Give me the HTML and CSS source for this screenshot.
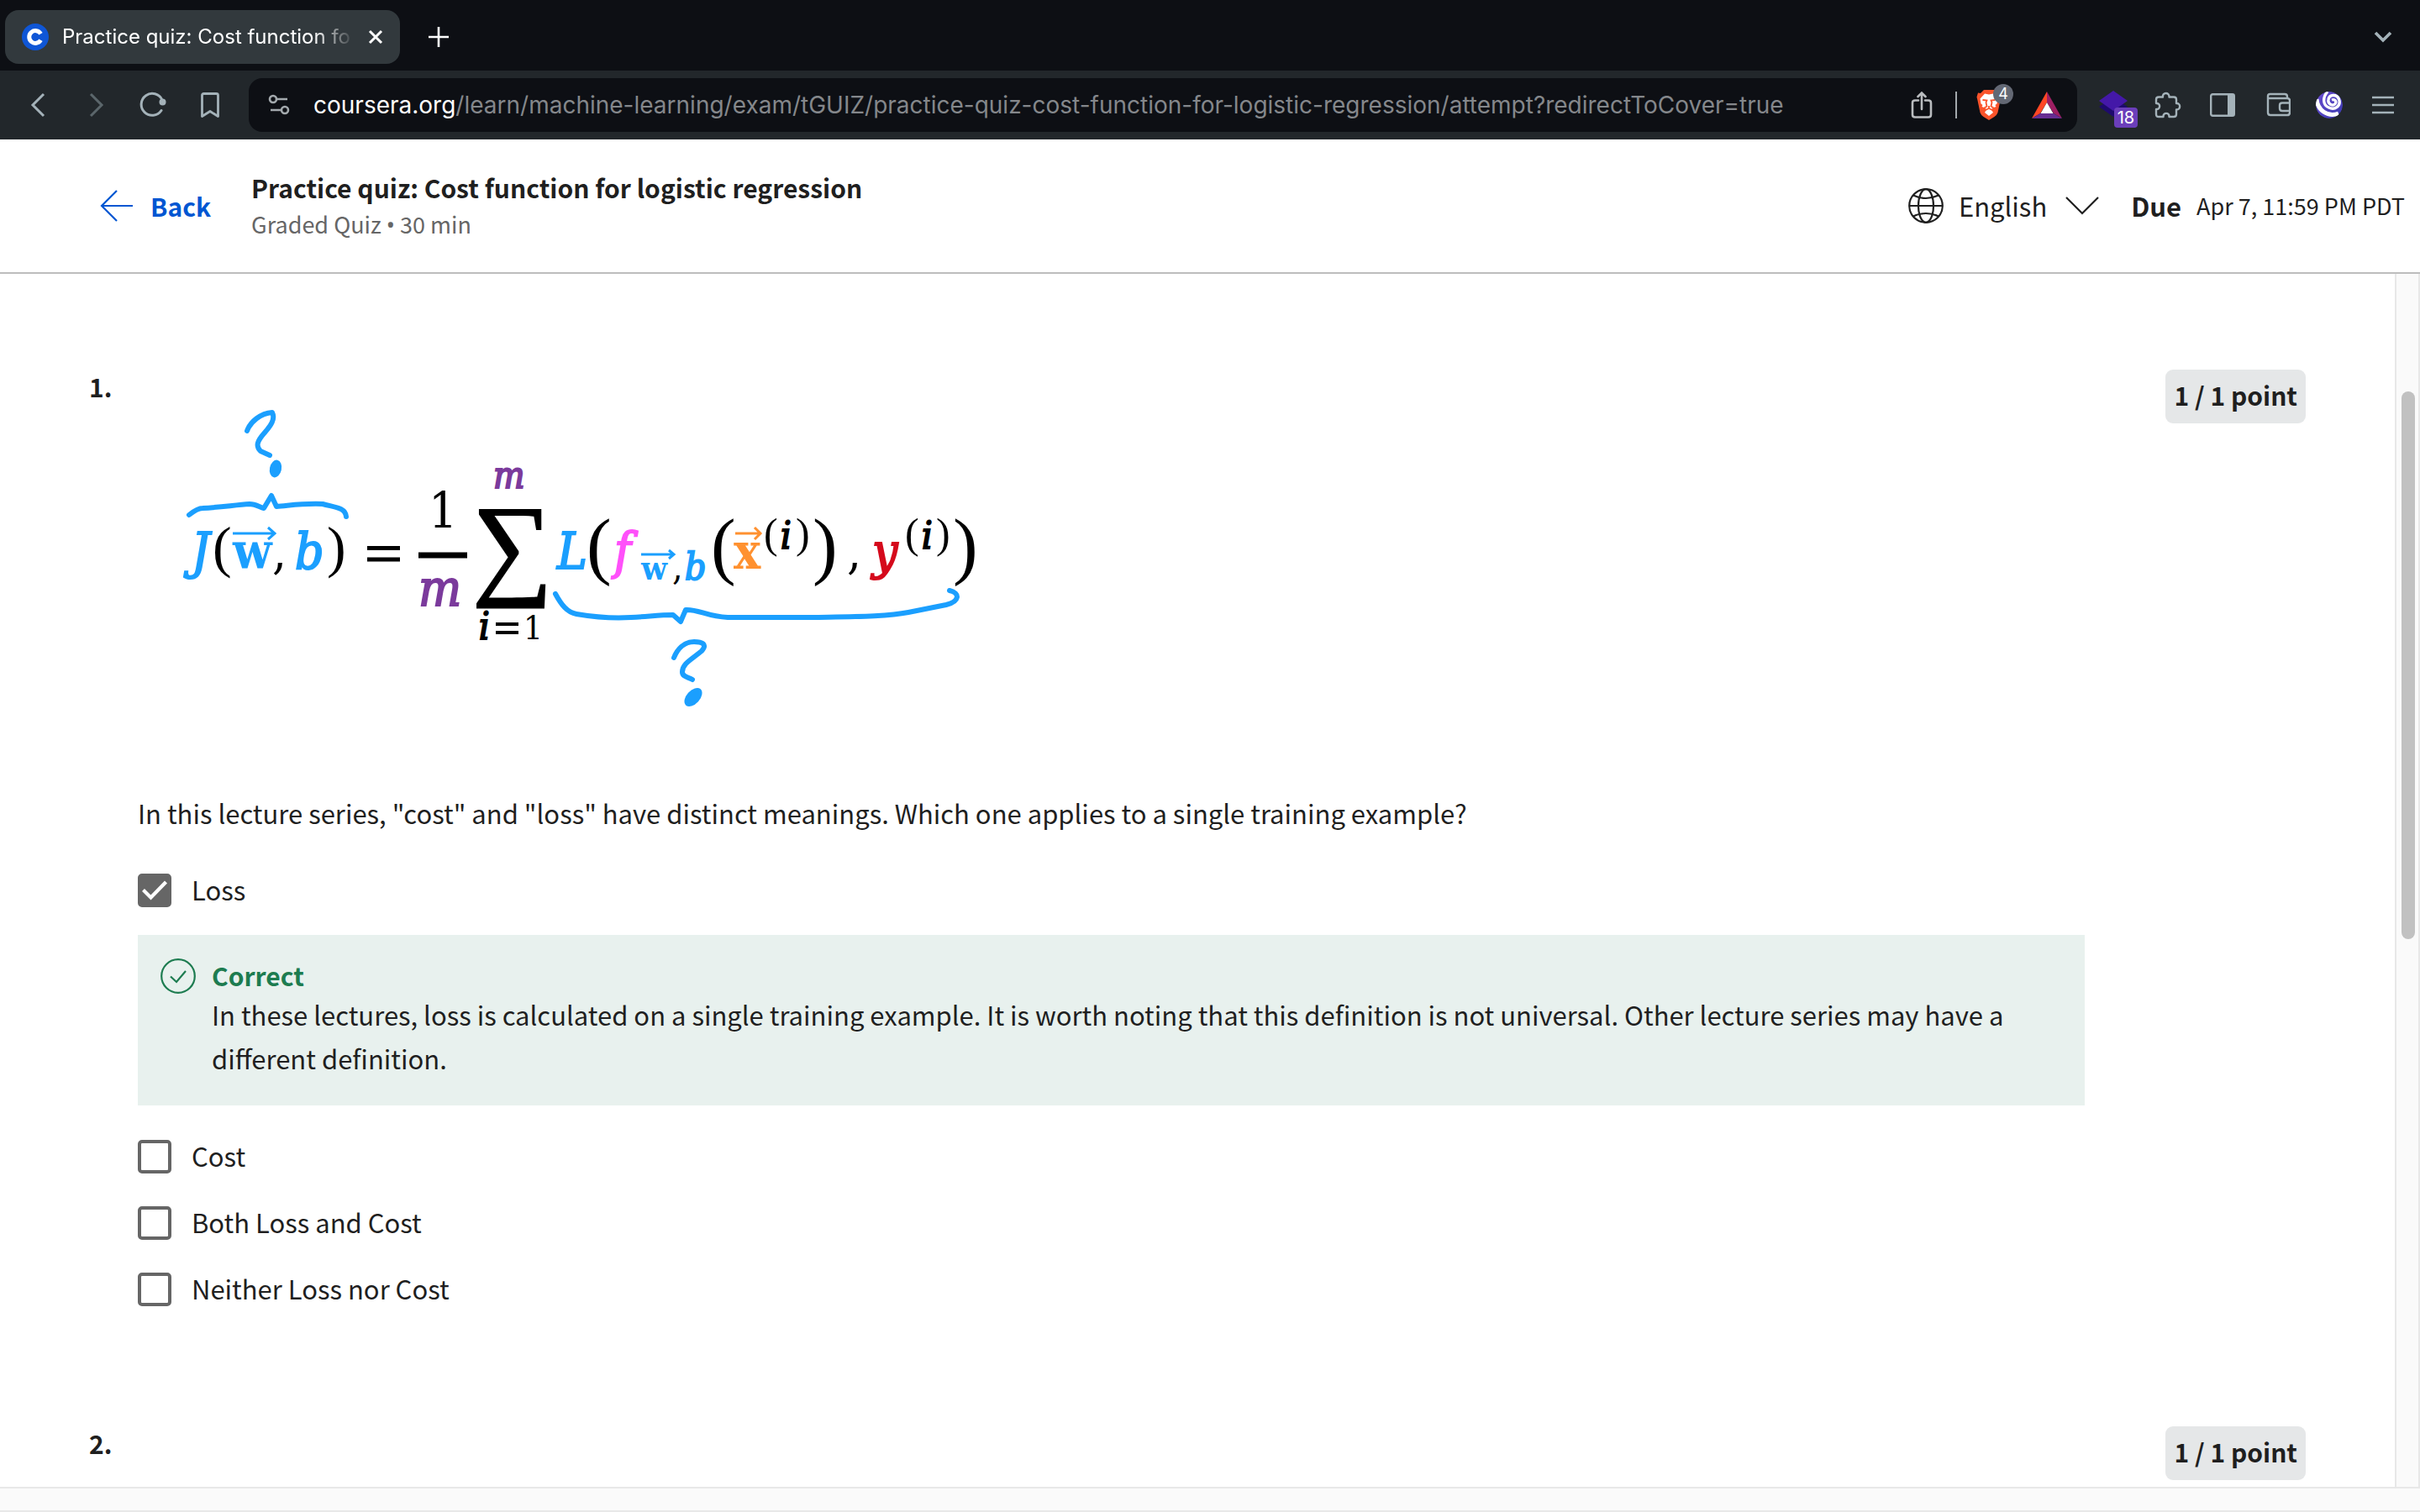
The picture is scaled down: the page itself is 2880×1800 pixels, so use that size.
FILE: index.html
```
<!DOCTYPE html>
<html lang="en">
<head>
<meta charset="utf-8">
<meta name="viewport" content="width=device-width, initial-scale=1">
<title>Practice quiz: Cost function for logistic regression</title>
<link rel="stylesheet" href="styles.css">
</head>
<body>
<div class="tabstrip">
  <div class="tab">
    <svg class="favicon" viewBox="0 0 32 32" aria-hidden="true"><circle cx="16" cy="16" r="16" fill="#0f56d6"/><path d="M22.5 12.2A7.4 7.4 0 1 0 22.5 19.8" fill="none" stroke="#fff" stroke-width="5"/></svg>
    <span class="tab-title">Practice quiz: Cost function fo</span>
    <button class="icon-button tab-close" aria-label="Close tab"><svg width="18" height="18" viewBox="0 0 18 18"><path d="M2 2l14 14M16 2L2 16" stroke="#fff" stroke-width="3"/></svg></button>
  </div>
  <button class="icon-button new-tab" aria-label="New tab"><svg width="24" height="24" viewBox="0 0 24 24"><path d="M12 0v24M0 12h24" stroke="#fff" stroke-width="2.6"/></svg></button>
  <button class="icon-button tab-search" aria-label="Search tabs"><svg width="24" height="16" viewBox="0 0 24 16"><path d="M3 3l9 9 9-9" fill="none" stroke="#a4b2b9" stroke-width="3.6"/></svg></button>
</div>

<div class="toolbar">
  <div class="nav-buttons">
    <button class="icon-button" aria-label="Back"><svg width="32" height="32" viewBox="0 0 32 32"><path d="M22 3L9 16l13 13" fill="none" stroke="#a4b2b9" stroke-width="3"/></svg></button>
    <button class="icon-button" aria-label="Forward"><svg width="32" height="32" viewBox="0 0 32 32"><path d="M10 3l13 13-13 13" fill="none" stroke="#5b666b" stroke-width="3"/></svg></button>
    <button class="icon-button" aria-label="Reload"><svg width="32" height="32" viewBox="0 0 32 32"><path d="M26 22.500A13 13 0 1 1 27 10" fill="none" stroke="#a4b2b9" stroke-width="3" stroke-linecap="round"/><circle cx="27.500" cy="12.500" r="4" fill="#a4b2b9"/></svg></button>
    <button class="icon-button" aria-label="Bookmark"><svg width="32" height="32" viewBox="0 0 32 32"><path d="M6.500 4.500q0-2 2-2h15q2 0 2 2v25L16 23.500l-9.500 6z" fill="none" stroke="#a4b2b9" stroke-width="2.800" stroke-linejoin="round"/></svg></button>
  </div>
  <div class="address">
    <svg class="site-icon" width="26" height="26" viewBox="0 0 26 26" fill="none" stroke="#a3a9ad" stroke-width="2.600"><circle cx="6" cy="6" r="4"/><path d="M10 6h13M3 19h13"/><circle cx="20" cy="19" r="4"/></svg>
    <div class="url"><span class="host">coursera.org</span>/learn/machine-learning/exam/tGUIZ/practice-quiz-cost-function-for-logistic-regression/attempt?redirectToCover=true</div>
    <button class="icon-button share" aria-label="Share"><svg width="26" height="34" viewBox="0 0 26 34" fill="none" stroke="#b9bcbf" stroke-width="2.600" stroke-linecap="round"><path d="M9 11.500H5q-3 0-3 3v14q0 3 3 3h16q3 0 3-3v-14q0-3-3-3h-4M13 22V3M8.500 7L13 2.500 17.500 7"/></svg></button>
    <span class="divider"></span>
    <button class="icon-button brave" aria-label="Brave Shields"><svg width="32" height="38" viewBox="0 0 32 38"><path d="M10 1h12l4 4 3-.5 1.500 5-1 4-3 14.500q-1 3-4 5L16 37l-6.500-4q-3-2-4-5L2.500 13.500l-1-4L3 4.500 6 5z" fill="#fb542b"/><path d="M16 6.500l5-1 5.500 6-1 6-2 1.500 1 2-4 1.500-1.500 2L21 28l-5 4-5-4 2-3.500-1.500-2-4-1.500 1-2-2-1.500-1-6 5.500-6z" fill="#fff"/><path d="M8.500 13l5 .5-1 2.500 1 4.500-3 2M23.500 13l-5 .5 1 2.500-1 4.500 3 2M10 26l6-3 6 3M16 20v3" fill="none" stroke="#fb542b" stroke-width="1.800"/></svg><span class="count">4</span></button>
    <button class="icon-button" aria-label="Brave Rewards"><svg width="38" height="32" viewBox="0 0 38 32"><path d="M19 0L1 32l10-6 8-13z" fill="#ff4724"/><path d="M19 0l18 32-10-6-8-13z" fill="#9e1f63"/><path d="M1 32h36l-10-6H11z" fill="#662d91"/><path d="M19 13l7.500 13h-15z" fill="#fff"/></svg></button>
  </div>
  <div class="extensions">
    <button class="icon-button layers" aria-label="Extension with 18 items"><svg width="34" height="34" viewBox="0 0 34 34"><path d="M17 8l17 11-17 12L0 19z" fill="#1e0a6e"/><path d="M17 0l17 12-17 12L0 12z" fill="#4418a8"/></svg><span class="tally">18</span></button>
    <button class="icon-button" aria-label="Extensions"><svg width="32" height="32" viewBox="0 0 32 32"><path d="M10 6.500C9 .5 18 .5 17.500 6.500H23q3 0 3 3V14c5.500-.5 5.500 8 0 7.500V27q0 3-3 3h-5.500c.5-5.500-7.500-5.500-7 0H5q-3 0-3-3v-6c5.500.5 5.500-7.500 0-7V9.500q0-3 3-3z" fill="none" stroke="#a4b2b9" stroke-width="2.400" stroke-linejoin="round"/></svg></button>
    <button class="icon-button" aria-label="Sidebar"><svg width="32" height="32" viewBox="0 0 32 32"><rect x="3.200" y="3.200" width="27.600" height="25.600" rx="2" fill="none" stroke="#a4b2b9" stroke-width="2.400"/><path d="M23 3h8v26h-8z" fill="#a4b2b9"/></svg></button>
    <button class="icon-button" aria-label="Wallet"><svg class="wide-icon" width="32" height="32" viewBox="0 0 32 32" fill="none" stroke="#a4b2b9" stroke-width="2.400"><path d="M28 8V6q0-3-3-3H7.500Q5 3 5 5.500V25q0 3 3 3h20q3 0 3-3V11q0-3-3-3H5"/><path d="M31 13.500H22q-3 0-3 3V20q0 3 3 3h9"/></svg></button>
    <button class="icon-button" aria-label="Profile"><svg width="32" height="32" viewBox="0 0 32 32"><defs><linearGradient id="orb" x1="0" y1="0" x2="1" y2="1"><stop offset="0" stop-color="#6a4bd0"/><stop offset="1" stop-color="#3a3ab0"/></linearGradient><clipPath id="disc"><circle cx="16" cy="16" r="16"/></clipPath></defs><g clip-path="url(#disc)"><circle cx="16" cy="16" r="16" fill="url(#orb)"/><path d="M19 10c4-1.500 6 2 4 4.500-3 3.500-9 0-8-5C16 3 25 3 27.500 9c3 8-5 13.500-12 10C8 16 8 7 14 0" fill="none" stroke="#fff" stroke-width="3.400"/><path d="M1 9C2 22 14 31 27 26" fill="none" stroke="#fff" stroke-width="5"/></g></svg></button>
    <button class="icon-button" aria-label="Menu"><svg width="32" height="32" viewBox="0 0 32 32"><path d="M3 7h26M3 16h26M3 25h26" stroke="#a4b2b9" stroke-width="2.600"/></svg></button>
  </div>
</div>

<header class="quiz-header">
  <a class="back" href="#"><svg width="40" height="38" viewBox="0 0 40 38"><path d="M39 19H2M20 1L2 19l18 18" fill="none" stroke="#0056d2" stroke-width="2.200"/></svg>Back</a>
  <div class="heading">
    <h1>Practice quiz: Cost function for logistic regression</h1>
    <p>Graded Quiz <span class="dot">•</span> 30 min</p>
  </div>
  <button class="language"><svg width="42" height="42" viewBox="0 0 42 42" fill="none" stroke="#1f1f1f" stroke-width="2.200"><circle cx="21" cy="21" r="19.800"/><ellipse cx="21" cy="21" rx="9" ry="19.800"/><path d="M1 21h40M6 8.500q15 7 30 0M6 33.500q15-7 30 0"/></svg>English<svg class="caret" width="40" height="22" viewBox="0 0 40 22"><path d="M1 1l19 19L39 1" fill="none" stroke="#1f1f1f" stroke-width="2.200"/></svg></button>
  <p class="due"><strong>Due</strong>Apr 7, 11:59 PM PDT</p>
</header>

<div class="viewport">
  <main class="questions">
    <section class="question">
      <h2 class="number">1.</h2>
      <div class="question-body">
        <svg class="formula" width="1056" height="460" viewBox="164 440 1056 460" role="img" aria-label="Cost function formula">
          <g class="ink">
            <path d="M294 513C298 502 310 492 324 491 328 499 322 507 315 515 306 525 304 531 310 537L321 542" stroke-width="6"/>
            <path d="M225 613q10-8 16-8c20-1 40-4 56-5 8 0 12 4 17 5l9-15 6 13c15-1 30-4 55-3 14 4 27 4 28 15" stroke-width="6"/>
            <path d="M661 707c7 13 14 22 25 24 30 5 50 5 65 4 20-1 35-3 50-3l9 8 6-14c15-1 25 8 50 9h100c50-1 90-1 115-6l45-9c16-4 17-14 4-17" stroke-width="6"/>
            <path d="M802 783c4-10 12-19 24-19 10 0 16 3 9 11-12 10-23 15-23 25 0 6 7 6 12 9" stroke-width="6"/>
          </g>
          <ellipse cx="328" cy="558" rx="7" ry="10.500" fill="#1b9ffe" transform="rotate(12 328 558)"/>
          <ellipse cx="825" cy="830" rx="8" ry="13" fill="#1b9ffe" transform="rotate(42 825 830)"/>
          <g class="vec">
            <path d="M277 635h48M319 628l8 7-8 7"/>
            <path d="M763 660h38M796 655l6 5-6 5"/>
            <path class="vec-x" d="M875 635h28M898 628l7 7-7 7"/>
          </g>
          <g class="math">
            <text x="228" y="677" class="main it blue">J</text>
            <text x="253" y="674" class="paren">(</text>
            <text x="277" y="677" class="main bold blue">w</text>
            <text x="324" y="677" class="main">,</text>
            <text x="351" y="677" class="main it blue">b</text>
            <text x="389" y="674" class="paren">)</text>
            <text x="510" y="629" class="main">1</text>
            <text x="498" y="721" class="main it purple">m</text>
            <text x="587" y="581" class="script it purple">m</text>
            <text x="562" y="695" class="sum">∑</text>
            <text x="570" y="761" class="script it">i</text>
            <text x="623" y="761" class="limit">1</text>
            <text x="663" y="677" class="main it blue">L</text>
            <text x="698" y="679" class="tall">(</text>
            <text x="731" y="677" class="main it pink">f</text>
            <text x="763" y="690" class="limit bold blue">w</text>
            <text x="800" y="690" class="script">,</text>
            <text x="815" y="690" class="script it blue">b</text>
            <text x="846" y="679" class="tall">(</text>
            <text x="873" y="677" class="main bold orange">x</text>
            <text x="909" y="652" class="power">(</text>
            <text x="929" y="653" class="script it">i</text>
            <text x="947" y="652" class="power">)</text>
            <text x="967" y="679" class="tall">)</text>
            <text x="1008" y="677" class="main">,</text>
            <text x="1038" y="677" class="main it red">y</text>
            <text x="1077" y="652" class="power">(</text>
            <text x="1097" y="653" class="script it">i</text>
            <text x="1114" y="652" class="power">)</text>
            <text x="1134" y="679" class="tall">)</text>
          </g>
          <path d="M437 652.500h39M437 666h39" stroke="#000" stroke-width="5"/>
          <path d="M590 743h27M590 753h27" stroke="#000" stroke-width="4"/>
          <path d="M498 661h58" stroke="#000" stroke-width="7"/>
        </svg>
        <p class="prompt">In this lecture series, "cost" and "loss" have distinct meanings. Which one applies to a single training example?</p>
        <label class="option"><input type="checkbox" checked>Loss</label>
        <div class="feedback">
          <svg width="42" height="42" viewBox="0 0 42 42" fill="none" stroke="#1d7c50" stroke-width="2.200"><circle cx="21" cy="21" r="19.800"/><path d="M12 21.500l7 6.500 11-13"/></svg>
          <div>
            <h3>Correct</h3>
            <p>In these lectures, loss is calculated on a single training example. It is worth noting that this definition is not universal. Other lecture series may have a different definition.</p>
          </div>
        </div>
        <label class="option"><input type="checkbox">Cost</label>
        <label class="option"><input type="checkbox">Both Loss and Cost</label>
        <label class="option"><input type="checkbox">Neither Loss nor Cost</label>
      </div>
      <span class="points">1 / 1 point</span>
    </section>
    <section class="question">
      <h2 class="number">2.</h2>
      <div class="question-body"></div>
      <span class="points">1 / 1 point</span>
    </section>
  </main>
  <div class="scroll-v"><div class="thumb"></div></div>
  <div class="scroll-h"></div>
</div>
</body>
</html>
```
FILE: styles.css
```
* { box-sizing: border-box; }

body {
  margin: 0;
  height: 100vh;
  display: flex;
  flex-direction: column;
  overflow: hidden;
  background: #fff;
  color: #1f1f1f;
  font: 31px/40px "Noto Sans CJK SC", "Noto Sans", sans-serif;
}

h1, h2, h3, p { margin: 0; }

button {
  border: 0;
  padding: 0;
  background: none;
  color: inherit;
  font: inherit;
}

svg { display: block; flex: none; }

/* Browser chrome */
.icon-button { position: relative; display: flex; flex: none; }

.tabstrip {
  flex: none;
  display: flex;
  align-items: center;
  height: 84px;
  padding: 4px 32px 0 6px;
  background: #0d0f14;
  color: #fff;
  font: 24px/32px Inter, sans-serif;
}

.tab {
  display: flex;
  align-items: center;
  width: 470px;
  height: 64px;
  padding: 0 20px;
  border-radius: 16px;
  background: #32393d;
}

.favicon { width: 32px; height: 32px; }

.tab-title {
  flex: 1;
  margin: 0 16px;
  white-space: nowrap;
  mask-image: linear-gradient(to right, #000 86%, transparent);
}

.new-tab { margin-left: 34px; }
.tab-search { margin-left: auto; }

.toolbar {
  flex: none;
  display: flex;
  align-items: center;
  height: 82px;
  padding: 0 28px 0 30px;
  background: #22272b;
  font-family: Inter, sans-serif;
}

.nav-buttons { display: flex; gap: 36px; margin-right: 30px; }

.address {
  flex: 1;
  min-width: 0;
  display: flex;
  align-items: center;
  height: 64px;
  padding: 0 17px 0 23px;
  border-radius: 16px;
  background: #0d0f14;
}

.url {
  flex: 1;
  min-width: 0;
  margin-left: 28px;
  overflow: hidden;
  color: #84878b;
  font-size: 28px;
  white-space: nowrap;
}

.host { color: #fff; }

.divider { width: 2px; height: 32px; margin: 0 22px 0 27px; background: #a3a9ad; }

.brave { margin-right: 34px; }

.count {
  position: absolute;
  top: -6px;
  left: 21px;
  width: 24px;
  border-radius: 12px;
  background: #636874;
  color: #fff;
  font: 18px/24px Inter, sans-serif;
  text-align: center;
}

.extensions { display: flex; align-items: center; gap: 32px; margin-left: 26px; }

.extensions .wide-icon { margin: 0 -2px 0 2px; }

.tally {
  position: absolute;
  top: 20px;
  left: 18px;
  width: 28px;
  border-radius: 4px;
  background: #6b3eba;
  color: #fff;
  font: 20px/24px Inter, sans-serif;
  text-align: center;
}

/* Quiz header */
.quiz-header {
  flex: none;
  display: flex;
  align-items: center;
  height: 160px;
  padding: 0 18px 0 119px;
  border-bottom: 2px solid #bdbdbd;
}

.back {
  display: flex;
  align-items: center;
  gap: 20px;
  color: #0056d2;
  font-size: 30px;
  font-weight: 700;
  text-decoration: none;
}

.heading { flex: 1; margin-left: 48px; }
.heading h1 { font-size: 30px; font-weight: 700; line-height: 44px; }
.heading p { color: #666; font-size: 27px; line-height: 44px; }
.dot { font-family: "Noto Sans", sans-serif; }

.language { display: flex; align-items: center; gap: 18px; }
.caret { margin-left: 4px; }

.due { display: flex; gap: 18px; margin-left: 38px; font-size: 27px; }
.due strong { font-size: 31px; }

/* Scrolling region */
.viewport {
  flex: 1;
  min-height: 0;
  display: grid;
  grid-template-columns: 1fr 30px;
  grid-template-rows: 1fr 30px;
}

.questions { overflow: hidden; padding: 114px 106px 0; }

.scroll-v {
  padding: 140px 4px 0 6px;
  border: solid #e8e8e8;
  border-width: 0 2px;
  background: #fafafa;
}

.thumb { height: 50%; border-radius: 8px; background: #c1c1c1; }

.scroll-h {
  grid-column: 1 / -1;
  border: solid #e8e8e8;
  border-width: 2px 0;
  background: #fafafa;
}

.question {
  display: grid;
  grid-template-columns: 58px 1fr auto;
  align-items: start;
  margin-bottom: 143px;
}

.number { font-size: 30px; font-weight: 700; line-height: 40px; }

.question-body { margin-right: 96px; }

.points {
  padding: 10px 10px 14px;
  border-radius: 9px;
  background: #e5e7e8;
  font-size: 30px;
  font-weight: 700;
}

.prompt { margin: 42px 0 46px; line-height: 52px; }

.option {
  display: flex;
  align-items: flex-start;
  gap: 24px;
  line-height: 38px;
}

.option + .option { margin-top: 39px; }

.option input {
  appearance: none;
  flex: none;
  width: 40px;
  height: 40px;
  margin: 0;
  border: 4px solid #666;
  border-radius: 5px;
  background: #fff;
}

.option input:checked {
  background: #666 url("data:image/svg+xml,%3Csvg xmlns='http://www.w3.org/2000/svg' viewBox='0 0 32 32'%3E%3Cpath d='M2.500 15.500l9 9L29.500 6' fill='none' stroke='%23fff' stroke-width='4.200'/%3E%3C/svg%3E") center / contain no-repeat;
}

.feedback {
  display: flex;
  gap: 19px;
  margin: 33px 0 41px;
  padding: 28px 27px 30px;
  background: #e8f1ee;
}

.feedback h3 { margin-bottom: 1px; color: #1d7c50; font-size: 30px; font-weight: 700; line-height: 40px; }
.feedback p { line-height: 52px; }

/* Annotated formula */
.ink { fill: none; stroke: #1b9ffe; stroke-linecap: round; stroke-linejoin: round; }
.vec { fill: none; stroke: #1b9ffe; stroke-width: 3; }
.vec .vec-x { stroke: #ff9130; }

.math { font-family: "DejaVu Serif Condensed", "DejaVu Serif", serif; fill: #000; }
.math .it { font-style: italic; stroke: #000; stroke-width: 2; }
.math .bold { font-weight: 700; }
.math .blue { fill: #1b9ffe; }
.math .it.blue { stroke: #1b9ffe; }
.math .purple { fill: #7b3a9c; stroke: #7b3a9c; }
.math .pink { fill: #ff50fa; stroke: #ff50fa; }
.math .orange { fill: #ff9130; }
.math .red { fill: #d50a1c; stroke: #d50a1c; }
.main { font-size: 60px; }
.script { font-size: 44px; }
.limit { font-size: 40px; }
.sum, .paren, .tall, .power { font-family: "Liberation Serif", serif; }
.sum { font-size: 134px; stroke: #000; stroke-width: 2; }
.paren { font-size: 68px; }
.power { font-size: 50px; }
.tall { font-size: 89px; }
```
